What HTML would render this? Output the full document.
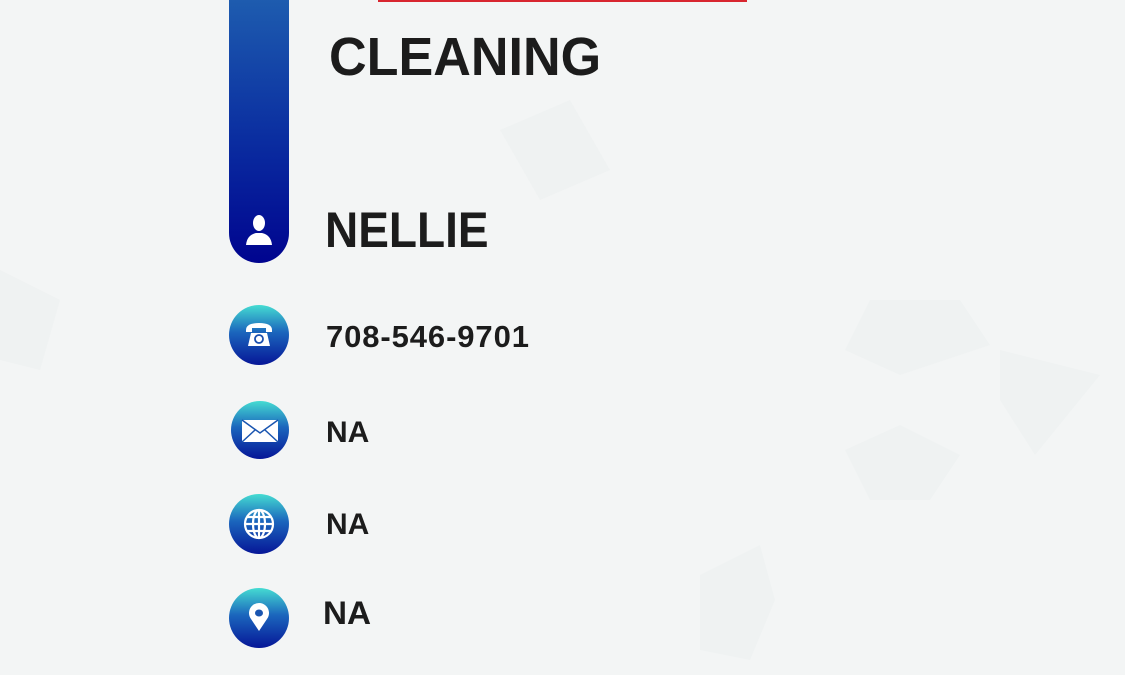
<!DOCTYPE html>
<html><head><meta charset="utf-8"><style>
html,body{margin:0;padding:0}
body{width:1125px;height:675px;overflow:hidden;background:#f3f5f5;position:relative;font-family:"Liberation Sans",Arial,sans-serif;color:#1c1c1c}
.t{position:absolute;font-weight:bold;white-space:nowrap;line-height:1;transform-origin:0 0}
.bar{position:absolute;left:229px;top:-10px;width:60px;height:273px;border-radius:0 0 30px 30px;background:linear-gradient(#1f5fb0,#0a2da0 55%,#00048f)}
.ic{position:absolute;left:229px;width:60px;height:60px;border-radius:50%;background:linear-gradient(#45dcd2 0%,#1b66bd 45%,#061697 100%)}
.ic svg{position:absolute;left:0;top:0}
</style></head><body>
<svg width="1125" height="675" style="position:absolute;left:0;top:0">
<g fill="#eff2f2">
<polygon points="870,300 960,300 990,345 900,375 845,350"/>
<polygon points="845,450 900,425 960,455 930,500 870,500"/>
<polygon points="700,575 760,545 775,600 750,660 700,650"/>
<polygon points="1000,350 1100,375 1035,455 1000,400"/>
<polygon points="500,130 570,100 610,170 540,200"/>
<polygon points="0,270 60,300 40,370 0,360"/>
</g>
<rect x="378" y="0" width="369" height="2" fill="#d8262f"/>
</svg>
<div class="bar"></div>
<svg width="60" height="40" style="position:absolute;left:229px;top:212px" viewBox="0 0 60 40">
<ellipse cx="30" cy="11" rx="6" ry="8" fill="#fff"/>
<path d="M17 33 Q18 23 27 21 L33 21 Q42 23 43 33 Z" fill="#fff"/>
</svg>
<div class="t" style="left:329px;top:30px;font-size:54px;transform:scaleX(0.965)">CLEANING</div>
<div class="t" style="left:325px;top:205px;font-size:50px;transform:scaleX(0.92)">NELLIE</div>

<div class="ic" style="top:305px"><svg width="60" height="60" viewBox="0 0 60 60">
<path d="M17 25 Q17 18 30 18 Q43 18 43 25 L43 27 L37 27 L37 23 L23 23 L23 27 L17 27 Z" fill="#fff"/>
<path d="M22 28 L38 28 L41 41 L19 41 Z" fill="#fff"/>
<circle cx="30" cy="34" r="4" fill="none" stroke="#1a4fae" stroke-width="1.8"/>
</svg></div>
<div class="t" style="left:326px;top:321px;font-size:31px;letter-spacing:0.9px">708-546-9701</div>

<div class="ic" style="top:401px;left:231px;width:58px;height:58px"><svg width="58" height="58" viewBox="0 0 58 58">
<rect x="11" y="19" width="36" height="22" fill="#fff"/>
<path d="M11 19 L29 32 L47 19 M11 41 L24 29 M47 41 L34 29" fill="none" stroke="#1a55b0" stroke-width="1.5"/>
</svg></div>
<div class="t" style="left:326px;top:418px;font-size:30px">NA</div>

<div class="ic" style="top:494px"><svg width="60" height="60" viewBox="0 0 60 60">
<g fill="none" stroke="#fff" stroke-width="2.2">
<circle cx="30" cy="30" r="14"/>
<ellipse cx="30" cy="30" rx="6" ry="14"/>
<line x1="30" y1="16" x2="30" y2="44"/>
<line x1="16" y1="30" x2="44" y2="30"/>
<line x1="18" y1="23" x2="42" y2="23"/>
<line x1="18" y1="37" x2="42" y2="37"/>
</g></svg></div>
<div class="t" style="left:326px;top:510px;font-size:30px">NA</div>

<div class="ic" style="top:588px"><svg width="60" height="60" viewBox="0 0 60 60">
<path d="M30 43 L22 31 A10 10 0 1 1 38 31 Z" fill="#fff"/>
<ellipse cx="30" cy="25" rx="4" ry="3.5" fill="#1a55b0"/>
</svg></div>
<div class="t" style="left:323px;top:597px;font-size:32px;transform:scaleX(1.04)">NA</div>
</body></html>
